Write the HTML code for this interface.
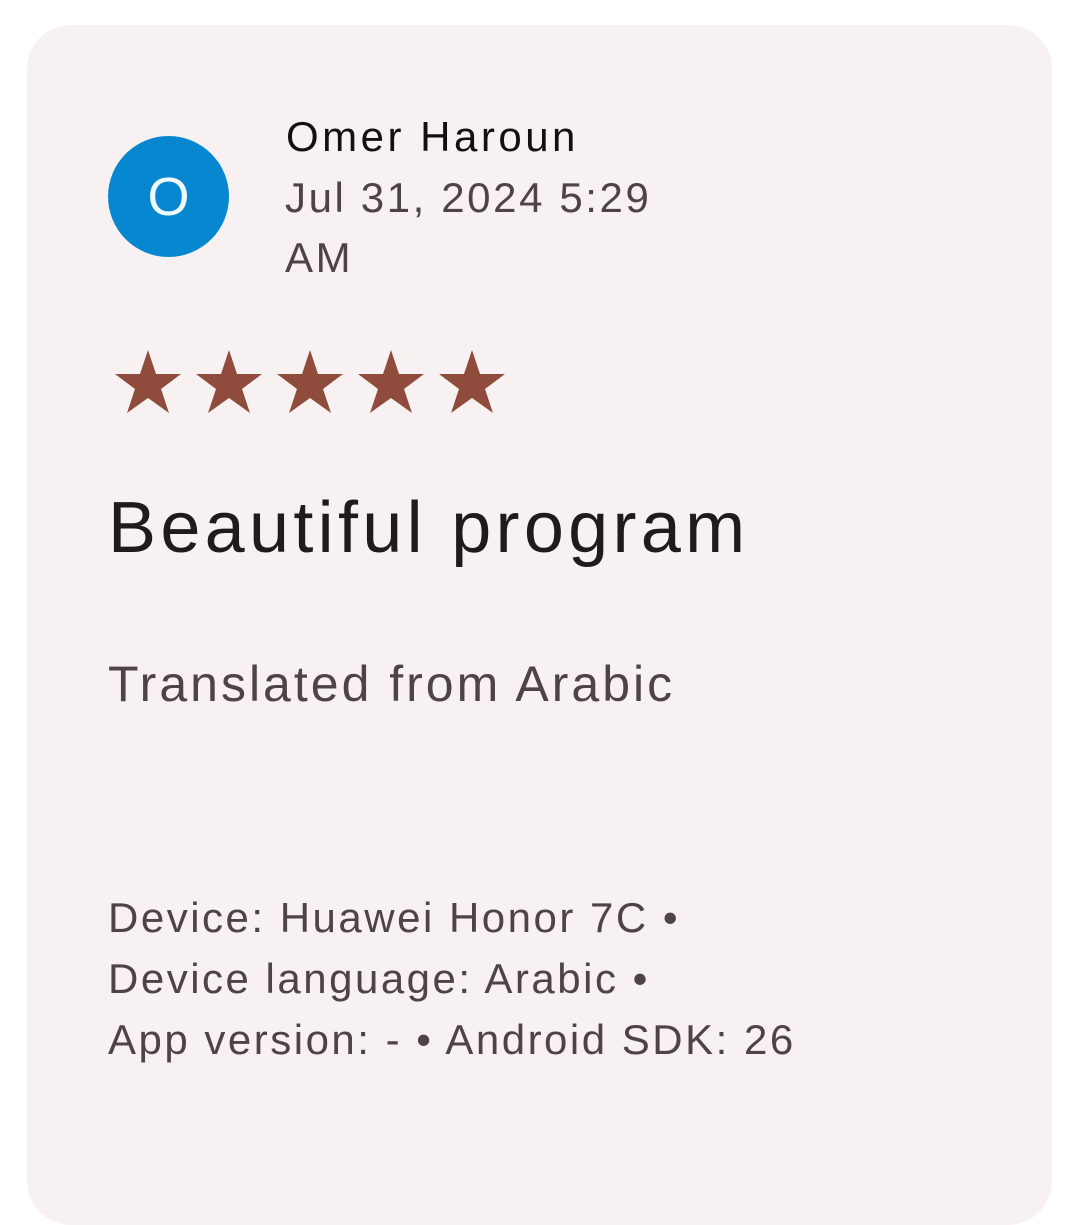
<!DOCTYPE html>
<html><head><style>
body{margin:0;width:1080px;height:1140px;background:#fff;overflow:hidden;font-family:"Liberation Sans",sans-serif;position:relative;}
.card{position:absolute;left:27px;top:25px;width:1025px;height:1200px;background:#f8f1f1;border-radius:44px;}
.t{position:absolute;white-space:nowrap;}
</style></head><body>
<div class="card"></div>
<div style="position:absolute;left:108px;top:136px;width:121px;height:121px;border-radius:50%;background:#0787d0;"></div>
<div class="t" style="left:108px;width:121px;text-align:center;top:170px;font-size:54px;line-height:54px;color:#f0fbff;">O</div>
<div class="t" style="left:286px;top:112px;font-size:42px;line-height:50px;color:#111;letter-spacing:3.5px;">Omer Haroun</div>
<div class="t" style="left:285px;top:168px;font-size:42px;line-height:60px;color:#4e4446;letter-spacing:2.6px;">Jul 31, 2024 5:29<br>AM</div>
<svg style="position:absolute;left:112px;top:347px" width="400" height="70" viewBox="0 0 400 70">
<g fill="#8f4b3c">
<polygon id="s" points="36,3 44,27 69,27 49,42 57,66 36,51 15,66 23,42 3,27 28,27"/>
<use href="#s" x="81"/><use href="#s" x="162"/><use href="#s" x="243"/><use href="#s" x="324"/>
</g></svg>
<div class="t" style="left:108px;top:488px;font-size:72px;line-height:80px;color:#1f1b1c;letter-spacing:4.3px;">Beautiful program</div>
<div class="t" style="left:108px;top:652px;font-size:50px;line-height:64px;color:#4e4446;letter-spacing:3px;">Translated from Arabic</div>
<div class="t" style="left:108px;top:887px;font-size:42px;line-height:61px;color:#4e4446;letter-spacing:2.5px;">Device: Huawei Honor 7C •<br>Device language: Arabic •<br>App version: - • Android SDK: 26</div>
</body></html>
